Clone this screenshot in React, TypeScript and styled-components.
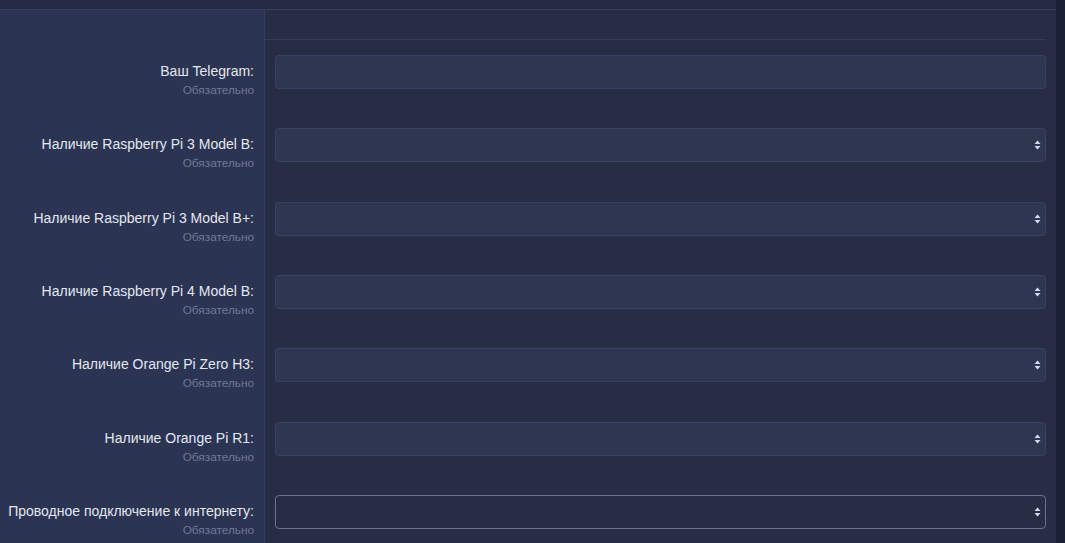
import React from "react";
import styled, { createGlobalStyle } from "styled-components";

const GlobalStyle = createGlobalStyle`
  html, body {
    margin: 0;
    padding: 0;
    background: #272d45;
    overflow: hidden;
  }
  body {
    font-family: "Liberation Sans", Arial, Helvetica, sans-serif;
  }
  * { box-sizing: border-box; }
`;

const Page = styled.div`
  display: flex;
  width: 100%;
  height: 543px;
  overflow: hidden;
`;

const Content = styled.div`
  flex: 1;
  display: flex;
  flex-direction: column;
  background: #272d45;
`;

const Rail = styled.div`
  width: 9px;
  flex: none;
  background: #1b2037;
`;

const TopBar = styled.div`
  height: 10px;
  flex: none;
  background: #262b43;
  border-bottom: 1px solid #353d5e;
`;

const Form = styled.div`
  display: grid;
  grid-template-columns: 265px 1fr;
  grid-template-rows: 30px;
  grid-auto-rows: calc(220px / 3);
`;

const LabelCell = styled.div`
  background: #2c3453;
  border-right: 1px solid #353d5e;
  padding: 21px 10px 0 0;
  text-align: right;
`;

const HeaderLabel = styled(LabelCell)`
  padding: 0;
`;

const HeaderCell = styled.div`
  height: 30px;
  margin-right: 10px;
  border-bottom: 1px solid #343b5b;
`;

const Label = styled.div`
  font-size: 14px;
  line-height: 20px;
  color: #e2e7f1;
  white-space: nowrap;
`;

const Hint = styled.div`
  margin-top: 2px;
  font-size: 11.8px;
  line-height: 14px;
  color: #6f7896;
  white-space: nowrap;
`;

const FieldCell = styled.div`
  padding: 15px 10px 0 10px;
`;

const TextInput = styled.input`
  display: block;
  width: 100%;
  height: 34px;
  margin: 0;
  padding: 0 10px;
  background: #2f3651;
  border: 1px solid #3a4263;
  border-radius: 4px;
  color: #dde3ef;
  font: inherit;
  font-size: 14px;
  outline: none;
`;

const SelectWrap = styled.div`
  position: relative;
  height: 34px;
`;

const Select = styled.select<{ $active?: boolean }>`
  display: block;
  width: 100%;
  height: 34px;
  margin: 0;
  padding: 0 24px 0 10px;
  appearance: none;
  -webkit-appearance: none;
  background: ${(p) => (p.$active ? "#272d45" : "#2f3651")};
  border: 1px solid ${(p) => (p.$active ? "#6b7291" : "#3a4263")};
  border-radius: 4px;
  color: #dde3ef;
  font: inherit;
  font-size: 14px;
  outline: none;
`;

const Caret = styled.svg`
  position: absolute;
  right: 5px;
  top: 12px;
  width: 7px;
  height: 10px;
  pointer-events: none;
`;

const SortCaret = () => (
  <Caret viewBox="0 0 7 10" aria-hidden="true">
    <path d="M3.5 0.5 L6.5 4 L0.5 4 Z" fill="#d3daea" />
    <path d="M0.5 6 L6.5 6 L3.5 9.5 Z" fill="#d3daea" />
  </Caret>
);

type Field = { label: string; kind: "text" | "select"; active?: boolean };

const fields: Field[] = [
  { label: "Ваш Telegram:", kind: "text" },
  { label: "Наличие Raspberry Pi 3 Model B:", kind: "select" },
  { label: "Наличие Raspberry Pi 3 Model B+:", kind: "select" },
  { label: "Наличие Raspberry Pi 4 Model B:", kind: "select" },
  { label: "Наличие Orange Pi Zero H3:", kind: "select" },
  { label: "Наличие Orange Pi R1:", kind: "select" },
  { label: "Проводное подключение к интернету:", kind: "select", active: true },
];

export default function App() {
  return (
    <>
      <GlobalStyle />
      <Page>
        <Content>
          <TopBar />
          <Form>
            <HeaderLabel />
            <div>
              <HeaderCell />
            </div>
            {fields.map((f) => (
              <React.Fragment key={f.label}>
                <LabelCell>
                  <Label>{f.label}</Label>
                  <Hint>Обязательно</Hint>
                </LabelCell>
                <FieldCell>
                  {f.kind === "text" ? (
                    <TextInput type="text" />
                  ) : (
                    <SelectWrap>
                      <Select $active={f.active} defaultValue="">
                        <option value=""></option>
                        <option value="yes">Да</option>
                        <option value="no">Нет</option>
                      </Select>
                      <SortCaret />
                    </SelectWrap>
                  )}
                </FieldCell>
              </React.Fragment>
            ))}
          </Form>
        </Content>
        <Rail />
      </Page>
    </>
  );
}
